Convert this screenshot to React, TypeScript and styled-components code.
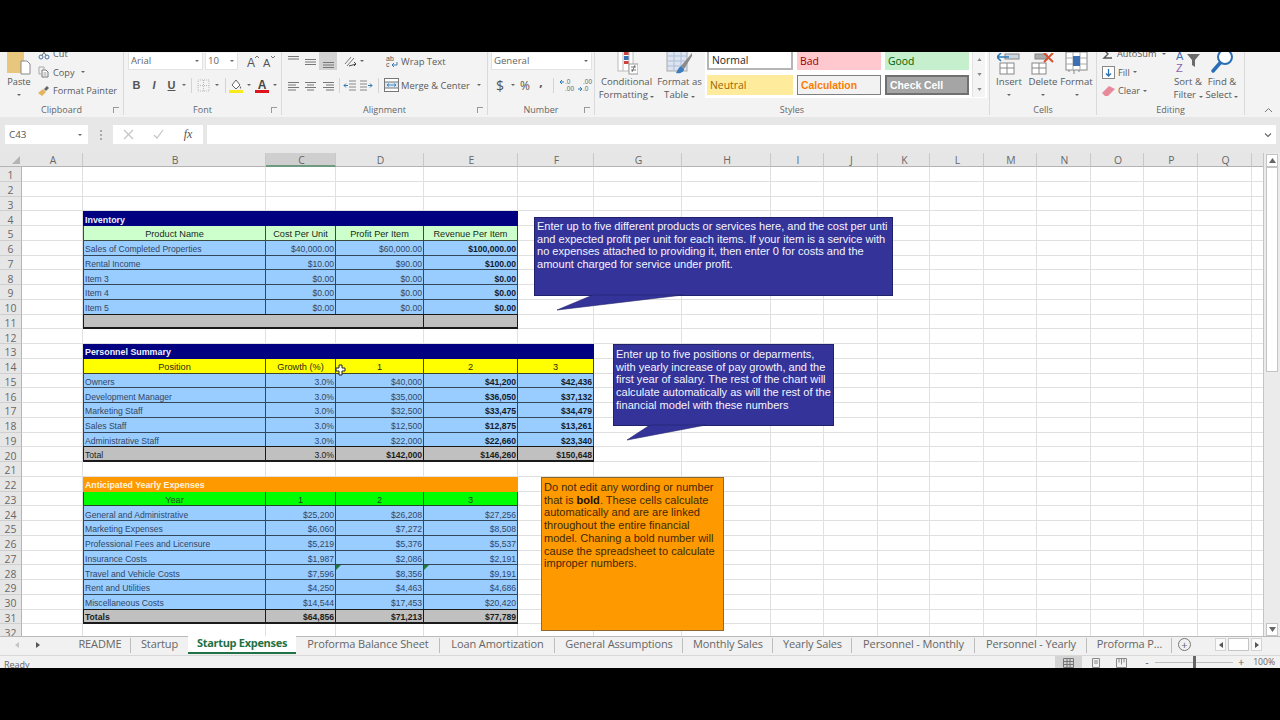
import styled, { createGlobalStyle } from 'styled-components';

const UI_FONT = `"Open Sans", "Noto Sans", "Liberation Sans", sans-serif`;
const CELL_FONT = `"Liberation Sans", Arial, sans-serif`;

const COL_WIDTHS = [61, 183, 70, 88, 94, 76, 88, 89, 53, 54, 52, 54, 53, 54, 53, 54, 54];
const COL_NAMES = 'ABCDEFGHIJKLMNOPQ'.split('');
const TEMPLATE = `22px ${COL_WIDTHS.map((w) => `${w}px`).join(' ')} 12px`;

type Tone = 'navy' | 'orange' | 'mint' | 'yellow' | 'lime' | 'blue' | 'grey';

type CellSpec = {
  col: number;
  span?: number;
  text?: string;
  tone: Tone;
  align?: 'left' | 'center' | 'right';
  bold?: boolean;
  flag?: boolean;
};

const title = (text: string, span: number, tone: Tone): CellSpec[] => [
  { col: 1, span, text, tone, bold: true },
];

const heads = (tone: Tone, labels: string[]): CellSpec[] =>
  labels.map((text, i) => ({ col: i + 1, text, tone, align: 'center' }));

const line = (
  label: string,
  values: string[],
  boldFrom = 99,
  tone: Tone = 'blue',
  flags: number[] = []
): CellSpec[] => [
  { col: 1, text: label, tone, bold: tone === 'grey' && boldFrom === 0 },
  ...values.map((text, i) => ({
    col: i + 2,
    text,
    tone,
    align: 'right' as const,
    bold: i >= boldFrom,
    flag: flags.includes(i),
  })),
];

const SHEET: Record<number, CellSpec[]> = {
  4: title('Inventory', 4, 'navy'),
  5: heads('mint', ['Product Name', 'Cost Per Unit', 'Profit Per Item', 'Revenue Per Item']),
  6: line('Sales of Completed Properties', ['$40,000.00', '$60,000.00', '$100,000.00'], 2),
  7: line('Rental Income', ['$10.00', '$90.00', '$100.00'], 2),
  8: line('Item 3', ['$0.00', '$0.00', '$0.00'], 2),
  9: line('Item 4', ['$0.00', '$0.00', '$0.00'], 2),
  10: line('Item 5', ['$0.00', '$0.00', '$0.00'], 2),
  11: [
    { col: 1, span: 3, tone: 'grey' },
    { col: 4, tone: 'grey' },
  ],
  13: title('Personnel Summary', 5, 'navy'),
  14: heads('yellow', ['Position', 'Growth (%)', '1', '2', '3']),
  15: line('Owners', ['3.0%', '$40,000', '$41,200', '$42,436'], 2),
  16: line('Development Manager', ['3.0%', '$35,000', '$36,050', '$37,132'], 2),
  17: line('Marketing Staff', ['3.0%', '$32,500', '$33,475', '$34,479'], 2),
  18: line('Sales Staff', ['3.0%', '$12,500', '$12,875', '$13,261'], 2),
  19: line('Administrative Staff', ['3.0%', '$22,000', '$22,660', '$23,340'], 2),
  20: line('Total', ['3.0%', '$142,000', '$146,260', '$150,648'], 1, 'grey'),
  22: title('Anticipated Yearly Expenses', 4, 'orange'),
  23: heads('lime', ['Year', '1', '2', '3']),
  24: line('General and Administrative', ['$25,200', '$26,208', '$27,256']),
  25: line('Marketing Expenses', ['$6,060', '$7,272', '$8,508']),
  26: line('Professional Fees and Licensure', ['$5,219', '$5,376', '$5,537']),
  27: line('Insurance Costs', ['$1,987', '$2,086', '$2,191']),
  28: line('Travel and Vehicle Costs', ['$7,596', '$8,356', '$9,191'], 99, 'blue', [1, 2]),
  29: line('Rent and Utilities', ['$4,250', '$4,463', '$4,686']),
  30: line('Miscellaneous Costs', ['$14,544', '$17,453', '$20,420']),
  31: line('Totals', ['$64,856', '$71,213', '$77,789'], 0, 'grey'),
};

const TABS = [
  { name: 'README', w: 62 },
  { name: 'Startup', w: 57 },
  { name: 'Startup Expenses', w: 108, active: true },
  { name: 'Proforma Balance Sheet', w: 144 },
  { name: 'Loan Amortization', w: 115 },
  { name: 'General Assumptions', w: 128 },
  { name: 'Monthly Sales', w: 90 },
  { name: 'Yearly Sales', w: 79 },
  { name: 'Personnel - Monthly', w: 123 },
  { name: 'Personnel - Yearly', w: 112 },
  { name: 'Proforma P\u2026', w: 85, last: true },
];

const toneStyles: Record<Tone, { bg: string; fg: string; line: string; size: number }> = {
  navy: { bg: '#000080', fg: '#eef0ff', line: '#000080', size: 8.9 },
  orange: { bg: '#ff9900', fg: '#fff4dc', line: '#ff9900', size: 8.8 },
  mint: { bg: '#ccffcc', fg: '#1a2a1a', line: '#3c4a44', size: 9.2 },
  yellow: { bg: '#ffff00', fg: '#2a2a0c', line: '#44442a', size: 9.2 },
  lime: { bg: '#00ff00', fg: '#1c4a1c', line: '#1f4a24', size: 9.2 },
  blue: { bg: '#99ccff', fg: '#33475f', line: '#34465c', size: 8.6 },
  grey: { bg: '#c0c0c0', fg: '#1c1c1c', line: '#1a1a1a', size: 8.6 },
};

const GlobalStyle = createGlobalStyle`
  html, body {
    margin: 0;
    background: #000;
  }
  #root {
    width: 1280px;
    height: 720px;
    overflow: hidden;
  }
`;

const Frame = styled.div`
  width: 1280px;
  height: 720px;
  padding: 52px 0;
  box-sizing: border-box;
  background: #000;
`;

const Excel = styled.div`
  height: 616px;
  display: flex;
  flex-direction: column;
  overflow: hidden;
  background: #f1f1f1;
  font-family: ${UI_FONT};
  color: #555;
`;

const Ribbon = styled.div`
  display: flex;
  height: 65px;
  flex: none;
  background: #f3f3f3;
`;

const Group = styled.div<{ $w: number }>`
  width: ${(p) => p.$w}px;
  flex: none;
  display: flex;
  flex-direction: column;
  border-right: 1px solid #dadada;
  box-sizing: border-box;
  margin-bottom: 2px;
`;

const GroupBody = styled.div<{ $pl?: number }>`
  height: 53px;
  display: flex;
  overflow: hidden;
  padding-left: ${(p) => p.$pl ?? 0}px;
`;

const GroupLabel = styled.div`
  display: grid;
  grid-template-columns: 1fr auto 1fr;
  align-items: center;
  height: 10px;
  font-size: 9px;
  line-height: 10px;
  color: #666;
`;

const Launcher = styled.i`
  justify-self: end;
  width: 5px;
  height: 5px;
  margin-right: 4px;
  border-left: 1px solid #999;
  border-bottom: 1px solid #999;
  transform: scaleY(-1);
`;

const Stack = styled.div<{ $w?: number }>`
  display: flex;
  flex-direction: column;
  width: ${(p) => (p.$w ? `${p.$w}px` : 'auto')};
  flex: none;
`;

const TwoRows = styled(Stack)`
  gap: 6px;
`;

const ToolRow = styled.div`
  display: flex;
  align-items: center;
  height: 18px;
`;

const ToolBtn = styled.div<{ $w: number; $on?: boolean }>`
  width: ${(p) => p.$w}px;
  height: 18px;
  flex: none;
  display: flex;
  align-items: center;
  justify-content: center;
  font-size: 11px;
  background: ${(p) => (p.$on ? '#d2d2d2' : 'transparent')};
`;

const BoldBtn = styled(ToolBtn)`
  font-family: ${CELL_FONT};
  font-weight: 700;
`;

const ItalicBtn = styled(BoldBtn)`
  font-style: italic;
`;

const UnderlineBtn = styled(BoldBtn)`
  text-decoration: underline;
`;

const DollarBtn = styled(ToolBtn)`
  font-size: 14px;
`;

const PercentBtn = styled(ToolBtn)`
  font-size: 12px;
`;

const CommaBtn = styled(ToolBtn)`
  font-size: 12px;
  font-weight: 700;
  padding-bottom: 7px;
  box-sizing: border-box;
`;

const ToolText = styled.span`
  font-size: 9.4px;
  white-space: nowrap;
  color: #5a5a5a;
  margin-left: 1px;
`;

const Divider = styled.i<{ $mx?: number }>`
  width: 1px;
  height: 15px;
  flex: none;
  margin: 0 ${(p) => p.$mx ?? 2}px;
  background: #d4d4d4;
`;

const Caret = styled.i<{ $mx?: number }>`
  display: inline-block;
  flex: none;
  width: 0;
  height: 0;
  margin: 0 ${(p) => p.$mx ?? 0}px;
  border-left: 2px solid transparent;
  border-right: 2px solid transparent;
  border-top: 2px solid #666;
`;

const LowCaret = styled(Caret)`
  margin-top: 6px;
`;

const PasteCol = styled.div`
  width: 32px;
  flex: none;
  display: flex;
  flex-direction: column;
  align-items: center;
  margin-left: 3px;
  margin-right: 3px;
  font-size: 9.2px;
  line-height: 12px;
`;

const ClipStack = styled(Stack)`
  margin-top: -7.5px;
  flex: none;
`;

const ClipItem = styled.div`
  height: 18.5px;
  display: flex;
  align-items: center;
  gap: 3px;
  font-size: 9.2px;
  white-space: nowrap;
  color: #5a5a5a;
`;

const Field = styled.div<{ $w: number; $ml?: number }>`
  width: ${(p) => p.$w}px;
  height: 17px;
  margin-left: ${(p) => p.$ml ?? 0}px;
  box-sizing: border-box;
  flex: none;
  display: flex;
  align-items: center;
  justify-content: space-between;
  padding: 0 3px 0 2px;
  background: #fff;
  border: 1px solid #e2e2e2;
  border-top: 0;
  font-size: 9.6px;
  color: #666;
`;

const LargeBtn = styled.div<{ $w: number }>`
  width: ${(p) => p.$w}px;
  flex: none;
  display: flex;
  flex-direction: column;
  align-items: center;
  text-align: center;
  font-size: 9.6px;
  line-height: 13px;
  color: #5a5a5a;
  white-space: nowrap;
`;

const LargeIcon = styled.div`
  height: 23px;
  display: flex;
  align-items: flex-end;
  overflow: hidden;
  flex: none;
`;

const Gallery = styled.div`
  display: grid;
  grid-template-columns: 86px 84px 84px;
  grid-template-rows: 18px 20px;
  column-gap: 4px;
  row-gap: 5px;
  width: 282px;
  height: 46px;
  padding-left: 2px;
  box-sizing: border-box;
  position: relative;
  background: #fff;
  font-family: ${CELL_FONT};
`;

const StyleChip = styled.div<{ $bg: string; $fg: string; $bold?: boolean; $edge?: string }>`
  display: flex;
  align-items: center;
  box-sizing: border-box;
  padding-left: 3px;
  font-size: 10.4px;
  font-family: ${(p) => (p.$bold ? CELL_FONT : UI_FONT)};
  font-weight: ${(p) => (p.$bold ? 700 : 400)};
  color: ${(p) => p.$fg};
  background: ${(p) => p.$bg};
  border: ${(p) => p.$edge ?? 'none'};
`;

const NormalChip = styled(StyleChip)`
  border-top: 0;
`;

const GalleryScroll = styled.div`
  position: absolute;
  top: 0;
  right: 2px;
  width: 12px;
  height: 45px;
  display: grid;
  grid-template-rows: 1fr 1fr 1fr;
  justify-items: center;
  align-items: center;
  background: #f4f4f4;
  border-left: 1px solid #e2e2e2;
`;

const CollapseCol = styled.div`
  flex: 1;
  display: flex;
  align-items: flex-end;
  justify-content: flex-end;
  padding: 0 7px 4px 0;
`;

const FormulaBar = styled.div`
  height: 36px;
  flex: none;
  display: flex;
  align-items: flex-start;
  box-sizing: border-box;
  padding: 8px 4px 0 5px;
  background: #e7e7e7;
`;

const NameBox = styled.div`
  width: 83px;
  height: 19px;
  box-sizing: border-box;
  display: flex;
  align-items: center;
  justify-content: space-between;
  padding: 0 6px 0 4px;
  background: #fff;
  font-size: 9.8px;
  color: #555;
`;

const GripDots = styled.div`
  width: 25px;
  height: 19px;
  display: flex;
  flex-direction: column;
  align-items: center;
  justify-content: center;
  gap: 2px;
  flex: none;
  & > i {
    width: 2px;
    height: 2px;
    background: #aaa;
  }
`;

const FxBox = styled.div`
  width: 90px;
  height: 19px;
  display: grid;
  grid-template-columns: 30px 30px 30px;
  align-items: center;
  justify-items: center;
  background: #fff;
  margin-right: 4px;
  flex: none;
`;

const FxLabel = styled.span`
  font-family: 'Liberation Serif', serif;
  font-style: italic;
  font-size: 12px;
  color: #555;
`;

const FormulaInput = styled.div`
  flex: 1;
  height: 19px;
  display: flex;
  align-items: center;
  justify-content: flex-end;
  padding-right: 4px;
  background: #fff;
`;

const SheetArea = styled.div`
  height: 483px;
  flex: none;
  display: flex;
`;

const Sheet = styled.div`
  width: 1264px;
  height: 483px;
  flex: none;
  position: relative;
  overflow: hidden;
  display: grid;
  grid-template-columns: ${TEMPLATE};
  grid-template-rows: 14px;
  grid-auto-rows: 14.75px;
  background: #fff;
  border-right: 1px solid #c4c4c4;
  box-sizing: border-box;
`;

const Corner = styled.div`
  background: #e6e6e6;
  border-bottom: 1px solid #b4b4b4;
  box-sizing: border-box;
  display: flex;
  align-items: flex-end;
  justify-content: flex-end;
  padding: 0 2px 2px 0;
  &::after {
    content: '';
    border-left: 8px solid transparent;
    border-bottom: 8px solid #b4b4b4;
  }
`;

const ColHead = styled.div<{ $on?: boolean }>`
  background: ${(p) => (p.$on ? '#cfcfcf' : '#e6e6e6')};
  border-bottom: ${(p) => (p.$on ? '2px solid #6f9a82' : '1px solid #b4b4b4')};
  border-right: 1px solid #c8c8c8;
  box-sizing: border-box;
  display: flex;
  align-items: center;
  justify-content: center;
  padding: 1px 0 0 2px;
  font-size: 10.4px;
  color: #666;
`;

const RowHead = styled.div`
  background: #e6e6e6;
  border-bottom: 1px solid #cfcfcf;
  border-right: 1px solid #b4b4b4;
  box-sizing: border-box;
  display: flex;
  align-items: center;
  justify-content: center;
  padding-top: 3px;
  font-size: 10.4px;
  color: #666;
`;

const Blank = styled.div`
  box-sizing: border-box;
  border-right: 1px solid #e0e0e0;
  border-bottom: 1px solid #e0e0e0;
`;

const Cell = styled.div<{
  $tone: Tone;
  $span: number;
  $align: string;
  $bold?: boolean;
  $edge?: boolean;
  $flag?: boolean;
}>`
  grid-column: span ${(p) => p.$span};
  position: relative;
  box-sizing: border-box;
  display: flex;
  align-items: center;
  justify-content: ${(p) =>
    p.$align === 'right' ? 'flex-end' : p.$align === 'center' ? 'center' : 'flex-start'};
  padding: 3px 1px 0 1px;
  overflow: hidden;
  white-space: nowrap;
  font-family: ${CELL_FONT};
  font-size: ${(p) => toneStyles[p.$tone].size}px;
  font-weight: ${(p) => (p.$bold ? 700 : 400)};
  background: ${(p) => toneStyles[p.$tone].bg};
  color: ${(p) => (p.$bold && p.$tone === 'blue' ? '#111a2c' : toneStyles[p.$tone].fg)};
  border-right: 1px solid ${(p) => toneStyles[p.$tone].line};
  border-bottom: ${(p) => (p.$tone === 'grey' ? '2px' : '1px')} solid ${(p) => toneStyles[p.$tone].line};
  border-left: ${(p) => (p.$edge ? `1px solid ${toneStyles[p.$tone].line}` : 'none')};
  ${(p) => (p.$tone === 'grey' ? 'border-top: 1px solid #1a1a1a; margin-top: -1px;' : '')}
  ${(p) =>
    p.$flag
      ? `&::before {
    content: '';
    position: absolute;
    top: 0;
    left: 0;
    border-top: 5px solid #1f7a3a;
    border-right: 5px solid transparent;
  }`
      : ''}
`;

const Callout = styled.div<{ $x: number; $y: number; $w: number; $h: number; $pad: string }>`
  position: absolute;
  left: ${(p) => p.$x}px;
  top: ${(p) => p.$y - 153}px;
  width: ${(p) => p.$w}px;
  height: ${(p) => p.$h}px;
  box-sizing: border-box;
  padding: ${(p) => p.$pad};
  background: #333399;
  border: 1px solid #22226a;
  color: #f4f4ff;
  font-family: ${CELL_FONT};
  font-size: 11.05px;
  line-height: 12.7px;
`;

const Tail = styled.svg`
  position: absolute;
  left: 0;
  top: 100%;
  overflow: visible;
`;

const Note = styled(Callout)`
  background: #ff9900;
  border-color: #8a6a30;
  color: #3d2a08;
`;

const NoteBold = styled.b`
  color: #201000;
`;

const Pointer = styled.svg`
  position: absolute;
  left: 335px;
  top: ${364 - 153}px;
`;

const ScrollBar = styled.div`
  width: 16px;
  flex: none;
  display: flex;
  flex-direction: column;
  background: #ebebeb;
  box-sizing: border-box;
  padding: 1px 2px 0 2px;
`;

const ScrollBtn = styled.div`
  height: 13px;
  flex: none;
  display: flex;
  align-items: center;
  justify-content: center;
  background: #fff;
  border: 1px solid #c4c4c4;
  box-sizing: border-box;
`;

const ScrollThumb = styled.div`
  height: 205px;
  flex: none;
  margin: 0 0 auto;
  background: #fff;
  border: 1px solid #c4c4c4;
  box-sizing: border-box;
`;

const TabBar = styled.div`
  height: 20px;
  flex: none;
  display: flex;
  align-items: stretch;
  background: #f1f1f1;
  border-top: 1px solid #b9b9b9;
  border-bottom: 1px solid #d8d8d8;
  box-sizing: border-box;
`;

const TabNav = styled.div`
  width: 69px;
  flex: none;
  display: flex;
  align-items: center;
  padding: 0 0 3px 15px;
  gap: 17px;
  box-sizing: border-box;
`;

const NavArrow = styled.i<{ $dir: 'left' | 'right'; $dim?: boolean }>`
  width: 0;
  height: 0;
  border-top: 3px solid transparent;
  border-bottom: 3px solid transparent;
  ${(p) => (p.$dir === 'left' ? 'border-right' : 'border-left')}: 4px solid ${(p) =>
    p.$dim ? '#c4c4c4' : '#555'};
`;

const Tab = styled.div<{ $w: number; $active?: boolean; $sep?: boolean }>`
  width: ${(p) => p.$w}px;
  flex: none;
  position: relative;
  box-sizing: border-box;
  display: flex;
  align-items: center;
  justify-content: center;
  white-space: nowrap;
  font-size: 11px;
  letter-spacing: ${(p) => (p.$active ? '-0.3px' : '-0.12px')};
  margin-top: -1px;
  height: 18px;
  padding-bottom: 3px;
  font-weight: ${(p) => (p.$active ? 700 : 400)};
  color: ${(p) => (p.$active ? '#1e7145' : '#666')};
  background: ${(p) => (p.$active ? '#fff' : 'transparent')};
  border-bottom: ${(p) => (p.$active ? '2px solid #217346' : 'none')};
  &::after {
    content: '';
    display: ${(p) => (p.$sep ? 'block' : 'none')};
    position: absolute;
    right: 0;
    top: 2px;
    bottom: 1px;
    width: 1px;
    background: #bdbdbd;
  }
`;

const TabTools = styled.div`
  flex: 1;
  display: flex;
  align-items: center;
  padding-bottom: 3px;
`;

const AddSheet = styled.div`
  width: 13px;
  height: 13px;
  border: 1px solid #777;
  border-radius: 50%;
  box-sizing: border-box;
  display: flex;
  align-items: center;
  justify-content: center;
  font-size: 11px;
  line-height: 1;
  color: #666;
  flex: none;
  margin-left: 6px;
`;

const HScroll = styled.div`
  display: flex;
  align-items: center;
  margin-left: 24px;
  gap: 2px;
`;

const HBtn = styled.div`
  width: 11px;
  height: 13px;
  display: flex;
  align-items: center;
  justify-content: center;
  background: #fafafa;
  border: 1px solid #d4d4d4;
  box-sizing: border-box;
`;

const HThumb = styled.div`
  width: 21px;
  height: 13px;
  background: #fff;
  border: 1px solid #c4c4c4;
  box-sizing: border-box;
`;

const StatusBar = styled.div`
  height: 12px;
  flex: none;
  display: flex;
  align-items: flex-start;
  background: #f1f1f1;
  font-size: 9px;
  line-height: 18px;
  padding-left: 4px;
  color: #666;
  overflow: hidden;
`;

const StatusRight = styled.div`
  margin-left: auto;
  display: flex;
  align-items: flex-start;
  height: 12px;
  padding-right: 5px;
`;

const ViewBtn = styled.div<{ $on?: boolean; $w: number }>`
  width: ${(p) => p.$w}px;
  height: 12px;
  display: flex;
  justify-content: center;
  padding-top: 2px;
  box-sizing: border-box;
  background: ${(p) => (p.$on ? '#d4d4d4' : 'transparent')};
`;

const ZoomMark = styled.span<{ $ml?: number }>`
  width: 12px;
  margin-left: ${(p) => p.$ml ?? 0}px;
  text-align: center;
  line-height: 12px;
  font-size: 11px;
`;

const ZoomTrack = styled.div`
  width: 78px;
  height: 12px;
  margin: 0 2px;
  display: flex;
  align-items: center;
  &::before {
    content: '';
    flex: 1;
    height: 1px;
    background: #bdbdbd;
  }
  &::after {
    content: '';
    flex: 1;
    height: 1px;
    background: #bdbdbd;
  }
`;

const ZoomThumb = styled.i`
  width: 3px;
  height: 12px;
  background: #666;
`;

const ZoomValue = styled.span`
  margin-left: 6px;
  font-size: 8.6px;
  line-height: 12px;
`;

const ChevronDown = () => (
  <svg width="8" height="6" viewBox="0 0 8 6">
    <path d="M1 1.5 4 4.5 7 1.5" fill="none" stroke="#666" strokeWidth="1.1" />
  </svg>
);

const PasteIcon = () => (
  <svg width="24" height="24" viewBox="0 0 24 24">
    <rect x="0" y="0" width="17" height="21" fill="#e8c67e" />
    <path d="M14 9h6l3 3v10h-9z" fill="#fff" stroke="#8a8a8a" />
  </svg>
);

const CutIcon = () => (
  <svg width="12" height="12" viewBox="0 0 12 12">
    <circle cx="3" cy="9" r="2" fill="none" stroke="#4a6fa5" />
    <circle cx="9" cy="9" r="2" fill="none" stroke="#4a6fa5" />
    <path d="M4 7.500 8 1M8 7.500 4 1" stroke="#777" fill="none" />
  </svg>
);

const CopyIcon = () => (
  <svg width="12" height="12" viewBox="0 0 12 12">
    <path d="M1 1h5v2M1 1v7h2" fill="none" stroke="#a9a9a9" />
    <path d="M4 4h4l2 2v5H4z" fill="#fff" stroke="#777" />
    <path d="M5.500 7h3M5.500 9h3" stroke="#999" />
  </svg>
);

const BrushIcon = () => (
  <svg width="12" height="12" viewBox="0 0 12 12">
    <path d="M0 8 5 4l3 3-4 4z" fill="#e3b45f" />
    <path d="M6 4 9 1l2 2-3 3z" fill="#666" />
  </svg>
);

const BorderIcon = () => (
  <svg width="13" height="13" viewBox="0 0 13 13">
    <rect x="1" y="1" width="11" height="11" fill="none" stroke="#bbb" strokeDasharray="1 1" />
    <path d="M6.500 1v11M1 6.500h11" stroke="#bbb" strokeDasharray="1 1" />
  </svg>
);

const FillIcon = () => (
  <svg width="14" height="15" viewBox="0 0 14 15">
    <path d="M3 7 7 2l4 5-4 4z" fill="#fff" stroke="#666" />
    <path d="M11 8c1 1 1.500 2 1 2.600-.8.3-1.500-1-1-2.600z" fill="#666" />
    <rect x="0" y="12" width="14" height="3" fill="#f7ec1a" />
  </svg>
);

const FontColorIcon = () => (
  <svg width="14" height="15" viewBox="0 0 14 15">
    <rect x="0" y="12" width="14" height="3" fill="#e0141f" />
    <text x="7" y="10.500" textAnchor="middle" fontFamily="Liberation Sans" fontWeight="700" fontSize="12" fill="#444">
      A
    </text>
  </svg>
);

const SizeA = ({ up }: { up?: boolean }) => (
  <svg width="13" height="13" viewBox="0 0 13 13">
    <text x="0" y="11.500" fontFamily="Liberation Sans" fontSize={up ? 12 : 11} fill="#555">
      A
    </text>
    <path d={up ? 'M8 3 10 1 12 3' : 'M8 1 10 3 12 1'} fill="none" stroke="#555" strokeWidth=".8" />
  </svg>
);

const AlignIcon = ({ widths, offset, y = 3 }: { widths: number[]; offset: (w: number) => number; y?: number }) => (
  <svg width="13" height="13" viewBox="0 0 13 13">
    {widths.map((w, i) => (
      <rect key={i} x={offset(w)} y={y + i * 2.5} width={w} height="1" fill="#777" />
    ))}
  </svg>
);

const OrientIcon = () => (
  <svg width="14" height="13" viewBox="0 0 14 13">
    <path d="M2 9 8 2M4 11l7-8" stroke="#777" fill="none" />
    <path d="M6 11l7-2" stroke="#444" fill="none" />
    <path d="M11 7l2 2-2 2" stroke="#444" fill="none" />
  </svg>
);

const WrapIcon = () => (
  <svg width="14" height="14" viewBox="0 0 14 14">
    <text x="1" y="6.500" fontFamily="Liberation Sans" fontSize="7" fill="#555">
      ab
    </text>
    <text x="1" y="13" fontFamily="Liberation Sans" fontSize="7" fill="#555">
      c
    </text>
    <path d="M7 11h5V8M7 11l2-2M7 11l2 2" stroke="#2f6fa8" fill="none" strokeWidth=".9" />
  </svg>
);

const IndentIcon = ({ flip }: { flip?: boolean }) => (
  <svg width="14" height="13" viewBox="0 0 14 13">
    <g transform={flip ? 'translate(14 0) scale(-1 1)' : undefined}>
      <path d="M6 2h7M6 5h7M6 8h7M6 11h7" stroke="#888" />
      <path d="M5 6.500H1M3 4.500l-2 2 2 2" stroke="#2a7ab8" fill="none" />
    </g>
  </svg>
);

const MergeIcon = () => (
  <svg width="15" height="14" viewBox="0 0 15 14">
    <rect x=".5" y=".5" width="14" height="13" fill="#fff" stroke="#777" />
    <rect x=".5" y="4" width="14" height="6" fill="#dbe7f3" stroke="#777" />
    <path d="M3 7h9M3 7l2-1.500M3 7l2 1.500M12 7l-2-1.500M12 7l-2 1.500" stroke="#2a7ab8" fill="none" strokeWidth=".8" />
  </svg>
);

const DecimalIcon = ({ inc }: { inc?: boolean }) => (
  <svg width="16" height="14" viewBox="0 0 16 14">
    <text x="6" y="6" fontFamily="Liberation Sans" fontSize="6.500" fill="#666">
      {inc ? '.0' : '.00'}
    </text>
    <text x="6" y="13" fontFamily="Liberation Sans" fontSize="6.500" fill="#666">
      {inc ? '.00' : '.0'}
    </text>
    <path d={inc ? 'M5 4H1M3 2 1 4l2 2' : 'M1 11h4M3 9l2 2-2 2'} stroke="#2a7ab8" fill="none" />
  </svg>
);

const CondIcon = () => (
  <svg width="22" height="24" viewBox="0 0 22 24">
    <rect x="2" y="0" width="15" height="20" fill="#fff" stroke="#bbb" />
    <rect x="8" y="0" width="5" height="4" fill="#d1443b" />
    <rect x="8" y="5" width="5" height="4" fill="#3d6fb5" />
    <rect x="8" y="10" width="5" height="3" fill="#d1443b" />
    <path d="M7 0v20M13 0v20" stroke="#bbb" />
    <rect x="13" y="13" width="9" height="10" fill="#fff" stroke="#999" />
    <path d="M15 16h5M15 19h5M19 14l-3 7" stroke="#555" fill="none" strokeWidth=".8" />
  </svg>
);

const TableIcon = () => (
  <svg width="27" height="24" viewBox="0 0 27 24">
    <rect x="1" y="0" width="20" height="20" fill="#dbe4f0" stroke="#aaa" />
    <path d="M1 5h20M1 10h20M1 15h20M8 0v20M15 0v20" stroke="#aebfd6" />
    <path d="M26 2 15 15l3 3L26 5z" fill="#8a8a8a" />
    <path d="M15 15c-2 1-3 3-5 7 4 1 8-1 8-4z" fill="#3d7cc0" />
  </svg>
);

const InsertIcon = () => (
  <svg width="24" height="22" viewBox="0 0 24 22">
    <rect x="8" y="1" width="14" height="5" fill="#cbd5e3" stroke="#888" />
    <path d="M12 4H0M4 0 0 4l4 4" fill="none" stroke="#2a7ab8" strokeWidth="1.600" />
    <rect x="3" y="10" width="14" height="11" fill="#fff" stroke="#888" />
    <path d="M3 15h14M10 10v11" stroke="#888" />
  </svg>
);

const DeleteIcon = () => (
  <svg width="24" height="22" viewBox="0 0 24 22">
    <rect x="4" y="1" width="12" height="5" fill="#aaa" stroke="#888" />
    <path d="M13 0l9 9M22 0l-9 9" stroke="#d9502f" strokeWidth="2" />
    <rect x="1" y="10" width="14" height="11" fill="#fff" stroke="#888" />
    <path d="M1 15h14M8 10v11" stroke="#888" />
  </svg>
);

const FormatIcon = () => (
  <svg width="23" height="24" viewBox="0 0 23 24">
    <rect x="1" y="1" width="21" height="18" fill="#fff" stroke="#888" />
    <path d="M1 7h21M1 13h21M8 1v18M15 1v18" stroke="#aaa" />
    <rect x="8" y="5" width="7" height="10" fill="#3d6fb5" />
    <path d="M4 19v2M9 19v4M14 19v2" stroke="#888" />
  </svg>
);

const SumGlyph = () => (
  <svg width="12" height="12" viewBox="0 0 12 12">
    <path d="M10 2H2l4 4-4 4h8" fill="none" stroke="#555" strokeWidth="1.400" />
  </svg>
);

const FillDown = () => (
  <svg width="13" height="13" viewBox="0 0 13 13">
    <rect x=".5" y=".5" width="12" height="12" fill="#fff" stroke="#888" />
    <path d="M6.500 3v7M4 7.500l2.500 2.500L9 7.500" stroke="#2a6fb5" fill="none" strokeWidth="1.300" />
  </svg>
);

const Eraser = () => (
  <svg width="13" height="12" viewBox="0 0 13 12">
    <path d="M0 8 7 1l6 3-7 7H3z" fill="#e78a9b" />
  </svg>
);

const SortIcon = () => (
  <svg width="26" height="24" viewBox="0 0 26 24">
    <text x="1" y="9" fontFamily="Liberation Sans" fontSize="11" fill="#3d6fb5">
      A
    </text>
    <text x="1" y="21" fontFamily="Liberation Sans" fontSize="11" fill="#8a5fb0">
      Z
    </text>
    <path d="M12 3h13l-5 6v7l-3-2V9z" fill="#6a6a6a" />
  </svg>
);

const FindIcon = () => (
  <svg width="24" height="24" viewBox="0 0 24 24">
    <circle cx="15" cy="6" r="7" fill="#fff" stroke="#2a6fb5" strokeWidth="2" />
    <path d="M10 12 3 20" stroke="#2a6fb5" strokeWidth="3.500" strokeLinecap="round" />
  </svg>
);

const ArrowGlyph = ({ down, light }: { down?: boolean; light?: boolean }) => (
  <svg width={light ? 5 : 7} height={light ? 3 : 5} viewBox="0 0 7 5">
    <path d={down ? 'M0 0h7L3.500 5z' : 'M0 5h7L3.500 0z'} fill={light ? '#888' : '#666'} />
  </svg>
);

const TailShape = ({ points }: { points: string }) => (
  <Tail width="1" height="1">
    <polygon points={points} fill="#333399" stroke="#22226a" strokeWidth=".6" />
  </Tail>
);

const renderRow = (n: number) => {
  const specs = SHEET[n] ?? [];
  const out = [<RowHead key={`h${n}`}>{n}</RowHead>];
  let c = 0;
  while (c < COL_NAMES.length) {
    const spec = specs.find((s) => s.col === c);
    if (spec) {
      const span = spec.span ?? 1;
      out.push(
        <Cell
          key={`${n}-${c}`}
          $tone={spec.tone}
          $span={span}
          $align={spec.align ?? 'left'}
          $bold={spec.bold}
          $edge={c === 1}
          $flag={spec.flag}
        >
          {spec.text}
        </Cell>
      );
      c += span;
    } else {
      out.push(<Blank key={`${n}-${c}`} />);
      c += 1;
    }
  }
  out.push(<Blank key={`${n}-end`} />);
  return out;
};

function App() {
  return (
    <Frame>
      <GlobalStyle />
      <Excel>
        <Ribbon>
          <Group $w={124}>
            <GroupBody>
              <PasteCol>
                <PasteIcon />
                Paste
                <LowCaret />
              </PasteCol>
              <ClipStack>
                <ClipItem>
                  <CutIcon />
                  Cut
                </ClipItem>
                <ClipItem>
                  <CopyIcon />
                  Copy <Caret $mx={3} />
                </ClipItem>
                <ClipItem>
                  <BrushIcon />
                  Format Painter
                </ClipItem>
              </ClipStack>
            </GroupBody>
            <GroupLabel>
              <span />
              Clipboard
              <Launcher />
            </GroupLabel>
          </Group>

          <Group $w={158}>
            <GroupBody $pl={4}>
              <TwoRows>
                <ToolRow>
                  <Field $w={75}>
                    Arial
                    <Caret />
                  </Field>
                  <Field $w={33} $ml={2}>
                    10
                    <Caret />
                  </Field>
                  <ToolBtn $w={8} />
                  <ToolBtn $w={15}>
                    <SizeA up />
                  </ToolBtn>
                  <ToolBtn $w={16}>
                    <SizeA />
                  </ToolBtn>
                </ToolRow>
                <ToolRow>
                  <BoldBtn $w={17}>B</BoldBtn>
                  <ItalicBtn $w={18}>I</ItalicBtn>
                  <UnderlineBtn $w={17}>U</UnderlineBtn>
                  <ToolBtn $w={8}>
                    <Caret />
                  </ToolBtn>
                  <Divider $mx={3} />
                  <ToolBtn $w={16}>
                    <BorderIcon />
                  </ToolBtn>
                  <ToolBtn $w={12}>
                    <Caret />
                  </ToolBtn>
                  <Divider $mx={2} />
                  <ToolBtn $w={16}>
                    <FillIcon />
                  </ToolBtn>
                  <ToolBtn $w={10}>
                    <Caret />
                  </ToolBtn>
                  <ToolBtn $w={16}>
                    <FontColorIcon />
                  </ToolBtn>
                  <ToolBtn $w={10}>
                    <Caret />
                  </ToolBtn>
                </ToolRow>
              </TwoRows>
            </GroupBody>
            <GroupLabel>
              <span />
              Font
              <Launcher />
            </GroupLabel>
          </Group>

          <Group $w={206}>
            <GroupBody $pl={2}>
              <TwoRows>
                <ToolRow>
                  <ToolBtn $w={18}>
                    <AlignIcon widths={[11, 11]} offset={() => 1} y={1} />
                  </ToolBtn>
                  <ToolBtn $w={17}>
                    <AlignIcon widths={[11, 11, 11]} offset={() => 1} y={4} />
                  </ToolBtn>
                  <ToolBtn $w={18} $on>
                    <AlignIcon widths={[11, 11, 11]} offset={() => 1} y={7} />
                  </ToolBtn>
                  <ToolBtn $w={4} />
                  <ToolBtn $w={18}>
                    <OrientIcon />
                  </ToolBtn>
                  <ToolBtn $w={6}>
                    <Caret />
                  </ToolBtn>
                  <ToolBtn $w={19} />
                  <ToolBtn $w={16}>
                    <WrapIcon />
                  </ToolBtn>
                  <ToolText>Wrap Text</ToolText>
                </ToolRow>
                <ToolRow>
                  <ToolBtn $w={18}>
                    <AlignIcon widths={[11, 8, 11, 8]} offset={() => 1} />
                  </ToolBtn>
                  <ToolBtn $w={17}>
                    <AlignIcon widths={[11, 7, 11, 7]} offset={(w) => (13 - w) / 2} />
                  </ToolBtn>
                  <ToolBtn $w={18}>
                    <AlignIcon widths={[11, 8, 11, 8]} offset={(w) => 12 - w} />
                  </ToolBtn>
                  <Divider $mx={2} />
                  <ToolBtn $w={16}>
                    <IndentIcon />
                  </ToolBtn>
                  <ToolBtn $w={16}>
                    <IndentIcon flip />
                  </ToolBtn>
                  <Divider $mx={4} />
                  <ToolBtn $w={17}>
                    <MergeIcon />
                  </ToolBtn>
                  <ToolText>Merge &amp; Center</ToolText>
                  <Caret $mx={7} />
                </ToolRow>
              </TwoRows>
            </GroupBody>
            <GroupLabel>
              <span />
              Alignment
              <Launcher />
            </GroupLabel>
          </Group>

          <Group $w={107}>
            <GroupBody $pl={3}>
              <TwoRows>
                <ToolRow>
                  <Field $w={101}>
                    General
                    <Caret />
                  </Field>
                </ToolRow>
                <ToolRow>
                  <DollarBtn $w={18}>$</DollarBtn>
                  <ToolBtn $w={8}>
                    <Caret />
                  </ToolBtn>
                  <PercentBtn $w={16}>%</PercentBtn>
                  <CommaBtn $w={16}>,</CommaBtn>
                  <Divider $mx={4} />
                  <ToolBtn $w={18}>
                    <DecimalIcon inc />
                  </ToolBtn>
                  <ToolBtn $w={18}>
                    <DecimalIcon />
                  </ToolBtn>
                </ToolRow>
              </TwoRows>
            </GroupBody>
            <GroupLabel>
              <span />
              Number
              <Launcher />
            </GroupLabel>
          </Group>

          <Group $w={395}>
            <GroupBody $pl={4}>
              <LargeBtn $w={55}>
                <LargeIcon>
                  <CondIcon />
                </LargeIcon>
                Conditional
                <br />
                <span>
                  Formatting <Caret />
                </span>
              </LargeBtn>
              <LargeBtn $w={51}>
                <LargeIcon>
                  <TableIcon />
                </LargeIcon>
                Format as
                <br />
                <span>
                  Table <Caret />
                </span>
              </LargeBtn>
              <Gallery>
                <NormalChip $bg="#fff" $fg="#222" $edge="2px solid #b5b5b5">
                  Normal
                </NormalChip>
                <StyleChip $bg="#ffc7ce" $fg="#9c0006">
                  Bad
                </StyleChip>
                <StyleChip $bg="#c6efce" $fg="#006100">
                  Good
                </StyleChip>
                <StyleChip $bg="#ffeb9c" $fg="#9c6500">
                  Neutral
                </StyleChip>
                <StyleChip $bg="#f2f2f2" $fg="#fa7d00" $bold $edge="1px solid #7f7f7f">
                  Calculation
                </StyleChip>
                <StyleChip $bg="#a5a5a5" $fg="#fff" $bold $edge="2px solid #707070">
                  Check Cell
                </StyleChip>
                <GalleryScroll>
                  <ArrowGlyph light />
                  <ArrowGlyph down light />
                  <ArrowGlyph down light />
                </GalleryScroll>
              </Gallery>
            </GroupBody>
            <GroupLabel>
              <span />
              Styles
              <span />
            </GroupLabel>
          </Group>

          <Group $w={107}>
            <GroupBody $pl={2}>
              <LargeBtn $w={34}>
                <LargeIcon>
                  <InsertIcon />
                </LargeIcon>
                Insert
                <LowCaret />
              </LargeBtn>
              <LargeBtn $w={34}>
                <LargeIcon>
                  <DeleteIcon />
                </LargeIcon>
                Delete
                <LowCaret />
              </LargeBtn>
              <LargeBtn $w={33}>
                <LargeIcon>
                  <FormatIcon />
                </LargeIcon>
                Format
                <LowCaret />
              </LargeBtn>
            </GroupBody>
            <GroupLabel>
              <span />
              Cells
              <span />
            </GroupLabel>
          </Group>

          <Group $w={148}>
            <GroupBody $pl={5}>
              <ClipStack $w={69}>
                <ClipItem>
                  <SumGlyph />
                  AutoSum <Caret $mx={3} />
                </ClipItem>
                <ClipItem>
                  <FillDown />
                  Fill <Caret />
                </ClipItem>
                <ClipItem>
                  <Eraser />
                  Clear <Caret />
                </ClipItem>
              </ClipStack>
              <LargeBtn $w={34}>
                <LargeIcon>
                  <SortIcon />
                </LargeIcon>
                Sort &amp;
                <br />
                <span>
                  Filter <Caret />
                </span>
              </LargeBtn>
              <LargeBtn $w={34}>
                <LargeIcon>
                  <FindIcon />
                </LargeIcon>
                Find &amp;
                <br />
                <span>
                  Select <Caret />
                </span>
              </LargeBtn>
            </GroupBody>
            <GroupLabel>
              <span />
              Editing
              <span />
            </GroupLabel>
          </Group>

          <CollapseCol>
            <svg width="9" height="6" viewBox="0 0 9 6">
              <path d="M1 5 4.500 1.500 8 5" fill="none" stroke="#777" strokeWidth="1" />
            </svg>
          </CollapseCol>
        </Ribbon>

        <FormulaBar>
          <NameBox>
            C43
            <Caret />
          </NameBox>
          <GripDots>
            <i />
            <i />
            <i />
          </GripDots>
          <FxBox>
            <svg width="11" height="11" viewBox="0 0 11 11">
              <path d="M1 1l9 9M10 1l-9 9" stroke="#c4c4c4" strokeWidth="1.200" />
            </svg>
            <svg width="11" height="11" viewBox="0 0 11 11">
              <path d="M1 6l3 3 6-8" stroke="#c4c4c4" strokeWidth="1.200" fill="none" />
            </svg>
            <FxLabel>fx</FxLabel>
          </FxBox>
          <FormulaInput>
            <ChevronDown />
          </FormulaInput>
        </FormulaBar>

        <SheetArea>
          <Sheet>
            <Corner />
            {COL_NAMES.map((name) => (
              <ColHead key={name} $on={name === 'C'}>
                {name}
              </ColHead>
            ))}
            <ColHead />
            {Array.from({ length: 32 }, (_, i) => renderRow(i + 1))}

            <Callout $x={534} $y={217} $w={359} $h={79} $pad="2px 1px 0 2px">
              Enter up to five different products or services here, and the cost per unti and expected profit per unit
              for each items. If your item is a service with no expenses attached to providing it, then enter 0 for
              costs and the amount charged for service under profit.
              <TailShape points="58,0 22,15 148,0" />
            </Callout>
            <Callout $x={613} $y={344} $w={221} $h={82} $pad="3px 1px 0 2px">
              Enter up to five positions or deparments, with yearly increase of pay growth, and the first year of
              salary. The rest of the chart will calculate automatically as will the rest of the financial model with
              these numbers
              <TailShape points="36,0 13,15 92,0" />
            </Callout>
            <Note $x={541} $y={477} $w={183} $h={154} $pad="3px 2px 0 2px">
              Do not edit any wording or number that is <NoteBold>bold</NoteBold>. These cells calculate automatically
              and are are linked throughout the entire financial model. Chaning a bold number will cause the
              spreadsheet to calculate improper numbers.
            </Note>
            <Pointer width="11" height="12" viewBox="0 0 11 12">
              <path d="M4 1h3v3h3v3H7v4H4V7H1V4h3z" fill="#fff" stroke="#222" strokeWidth="1" />
            </Pointer>
          </Sheet>
          <ScrollBar>
            <ScrollBtn>
              <ArrowGlyph />
            </ScrollBtn>
            <ScrollThumb />
            <ScrollBtn>
              <ArrowGlyph down />
            </ScrollBtn>
          </ScrollBar>
        </SheetArea>

        <TabBar>
          <TabNav>
            <NavArrow $dir="left" $dim />
            <NavArrow $dir="right" />
          </TabNav>
          {TABS.map((t) => (
            <Tab key={t.name} $w={t.w} $active={t.active} $sep={!t.active && t.name !== 'Startup'}>
              {t.name}
            </Tab>
          ))}
          <TabTools>
            <AddSheet>+</AddSheet>
            <HScroll>
              <HBtn>
                <NavArrow $dir="left" />
              </HBtn>
              <HThumb />
              <HBtn>
                <NavArrow $dir="right" />
              </HBtn>
            </HScroll>
          </TabTools>
        </TabBar>

        <StatusBar>
          Ready
          <StatusRight>
            <ViewBtn $w={27} $on>
              <svg width="11" height="10" viewBox="0 0 11 10">
                <path d="M.5.500h10v9H.5zM.5 3.500h10M.5 6.500h10M4 .5v9M7 .5v9" fill="none" stroke="#777" />
              </svg>
            </ViewBtn>
            <ViewBtn $w={27}>
              <svg width="10" height="10" viewBox="0 0 10 10">
                <path d="M1.500.500h7v9h-7zM3 3h4M3 5h4" fill="none" stroke="#888" />
              </svg>
            </ViewBtn>
            <ViewBtn $w={24}>
              <svg width="11" height="10" viewBox="0 0 11 10">
                <path d="M.5.500h10v9H.5zM5.500.5v6M3 .5v4M8 .5v4" fill="none" stroke="#888" />
              </svg>
            </ViewBtn>
            <ZoomMark $ml={8}>-</ZoomMark>
            <ZoomTrack>
              <ZoomThumb />
            </ZoomTrack>
            <ZoomMark>+</ZoomMark>
            <ZoomValue>100%</ZoomValue>
          </StatusRight>
        </StatusBar>
      </Excel>
    </Frame>
  );
}

export default App;
